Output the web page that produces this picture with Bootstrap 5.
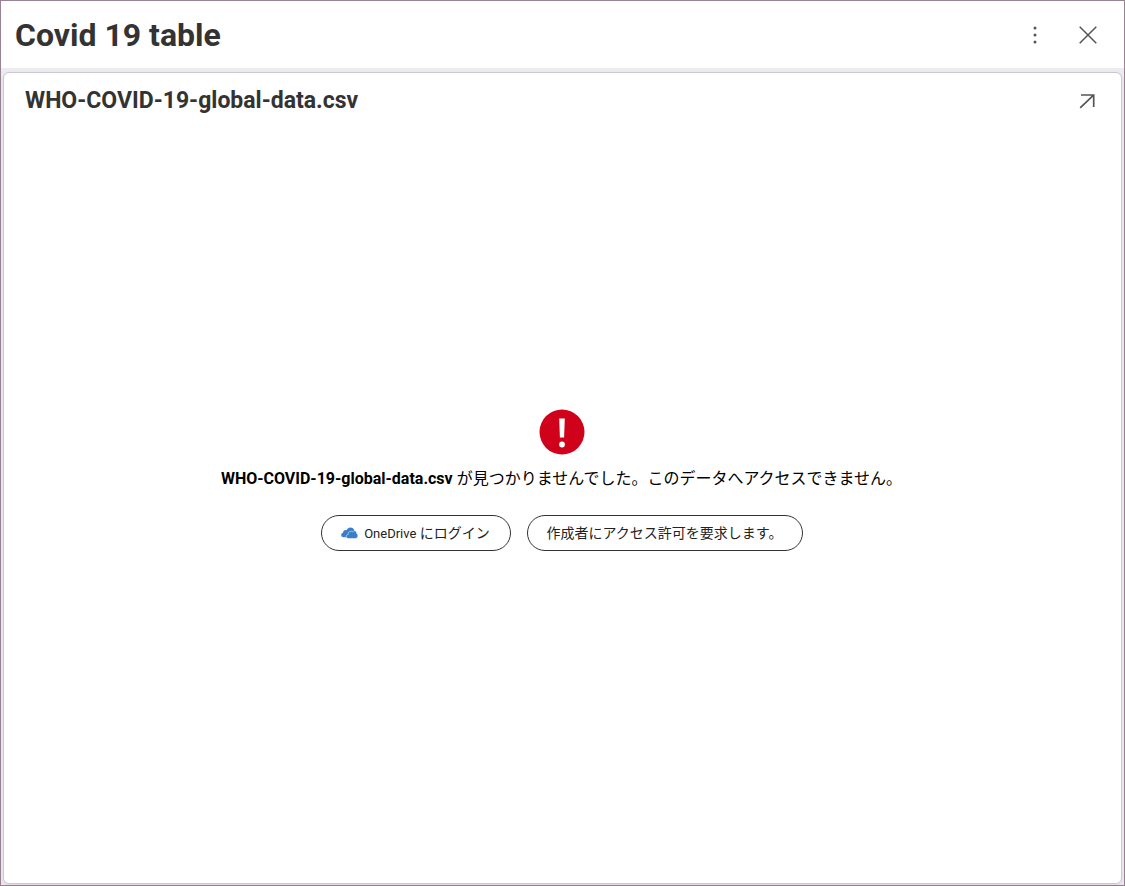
<!DOCTYPE html>
<html lang="ja">
<head>
<meta charset="utf-8">
<meta name="viewport" content="width=device-width, initial-scale=1">
<title>Covid 19 table</title>
<link href="https://cdn.jsdelivr.net/npm/bootstrap@5.3.0/dist/css/bootstrap.min.css" rel="stylesheet">
<style>
  body { font-family: Roboto, "Noto Sans CJK JP", sans-serif; color: #333; }
  .viewer { border: 1px solid #998291; background: #ebebf1; }
  .viewer-header { height: 67px; padding: 0 20px 0 14px; }
  .viewer-title { font-size: 32px; line-height: 40px; }
  .panel { margin: 4px 2px 1px; border: 1px solid #c9c9ce; border-radius: 6px; }
  .panel-header { padding: 12px 18px 0 21px; }
  .panel-title { font-size: 23px; line-height: 32px; }
  .icon-btn { width: 32px; height: 32px; color: #555; }
  .icon-group { gap: 21px; }
  .notice { padding: 0 2px 40px 0; }
  .notice-text { font-size: 16px; line-height: 24px; color: #000; margin: 12px 0 24px; }
  .pill-btn { height: 36px; font-size: 14px; line-height: 20px; border: 1px solid #333; color: #222; }
  .pill-login { width: 190px; }
  .pill-request { width: 276px; }
  .pill-login svg { margin-right: 6px; }
  .latin { font-size: 13px; }
</style>
</head>
<body>
<div class="viewer d-flex flex-column min-vh-100">
  <header class="viewer-header bg-white d-flex align-items-center justify-content-between">
    <h1 class="viewer-title fw-bold m-0">Covid 19 table</h1>
    <div class="icon-group d-flex">
      <button type="button" class="icon-btn btn p-0 border-0 d-flex align-items-center justify-content-center" aria-label="メニュー">
        <svg width="18" height="18" viewBox="0 0 18 18" fill="currentColor"><circle cx="9" cy="2" r="1.5"/><circle cx="9" cy="9" r="1.5"/><circle cx="9" cy="16" r="1.5"/></svg>
      </button>
      <button type="button" class="icon-btn btn p-0 border-0 d-flex align-items-center justify-content-center" aria-label="閉じる">
        <svg width="18" height="18" viewBox="0 0 18 18" fill="none" stroke="currentColor" stroke-width="1.5"><path d="M.7.7l16.600 16.600M17.300.7L.7 17.300"/></svg>
      </button>
    </div>
  </header>
  <main class="panel bg-white flex-grow-1 d-flex flex-column shadow-sm">
    <div class="panel-header d-flex align-items-center justify-content-between">
      <h2 class="panel-title fw-bold m-0">WHO-COVID-19-global-data.csv</h2>
      <button type="button" class="icon-btn btn p-0 border-0 d-flex align-items-center justify-content-center" aria-label="展開">
        <svg width="16" height="16" viewBox="0 0 16 16" fill="none" stroke="currentColor" stroke-width="1.700"><path d="M2 2h12.700V14M14.500 2.200L1.200 14.800"/></svg>
      </button>
    </div>
    <section class="notice flex-grow-1 d-flex flex-column align-items-center justify-content-center text-center">
      <svg width="46" height="46" viewBox="0 0 46 46" aria-hidden="true"><circle cx="23" cy="23" r="22.500" fill="#d0021b"/><path d="M20.200 9.500h5.600l-.7 19h-4.200z" fill="#fff"/><circle cx="23" cy="35.500" r="2.900" fill="#fff"/></svg>
      <p class="notice-text"><strong class="fw-bold">WHO-COVID-19-global-data.csv</strong> が見つかりませんでした。このデータへアクセスできません。</p>
      <div class="d-flex flex-wrap justify-content-center gap-3">
        <button type="button" class="pill-btn pill-login btn rounded-pill p-0 d-flex align-items-center justify-content-center">
          <svg width="17" height="12" viewBox="0 0 17 12" aria-hidden="true"><path d="M5.200 10.300H2.600C1.100 10.300.2 9.300.2 8c0-1.200.8-2 1.800-2.200C2 4.200 3.200 3 4.700 3c.4 0 .7 0 1 .2C6.400 1.500 7.700.6 9.300.6c2 0 3.600 1.200 4.200 3" fill="#3b7fc8"/><path d="M7.600 11.500C6.200 11.500 5.200 10.700 5.200 9.500c0-1.100.8-1.900 1.900-2-.1-1.900 1.100-3.200 2.700-3.200.7 0 1.200.2 1.600.6.5-.8 1.200-1.200 2-1.200 1.400 0 2.300 1.100 2.200 2.700.8.3 1.300 1.100 1.300 2.200 0 1.700-1 2.900-2.500 2.900z" fill="#3b7fc8" stroke="#fff" stroke-width=".5"/></svg>
          <span><span class="latin">OneDrive</span> にログイン</span>
        </button>
        <button type="button" class="pill-btn pill-request btn rounded-pill p-0">作成者にアクセス許可を要求します。</button>
      </div>
    </section>
  </main>
</div>
<script src="https://cdn.jsdelivr.net/npm/bootstrap@5.3.0/dist/js/bootstrap.bundle.min.js"></script>
</body>
</html>
